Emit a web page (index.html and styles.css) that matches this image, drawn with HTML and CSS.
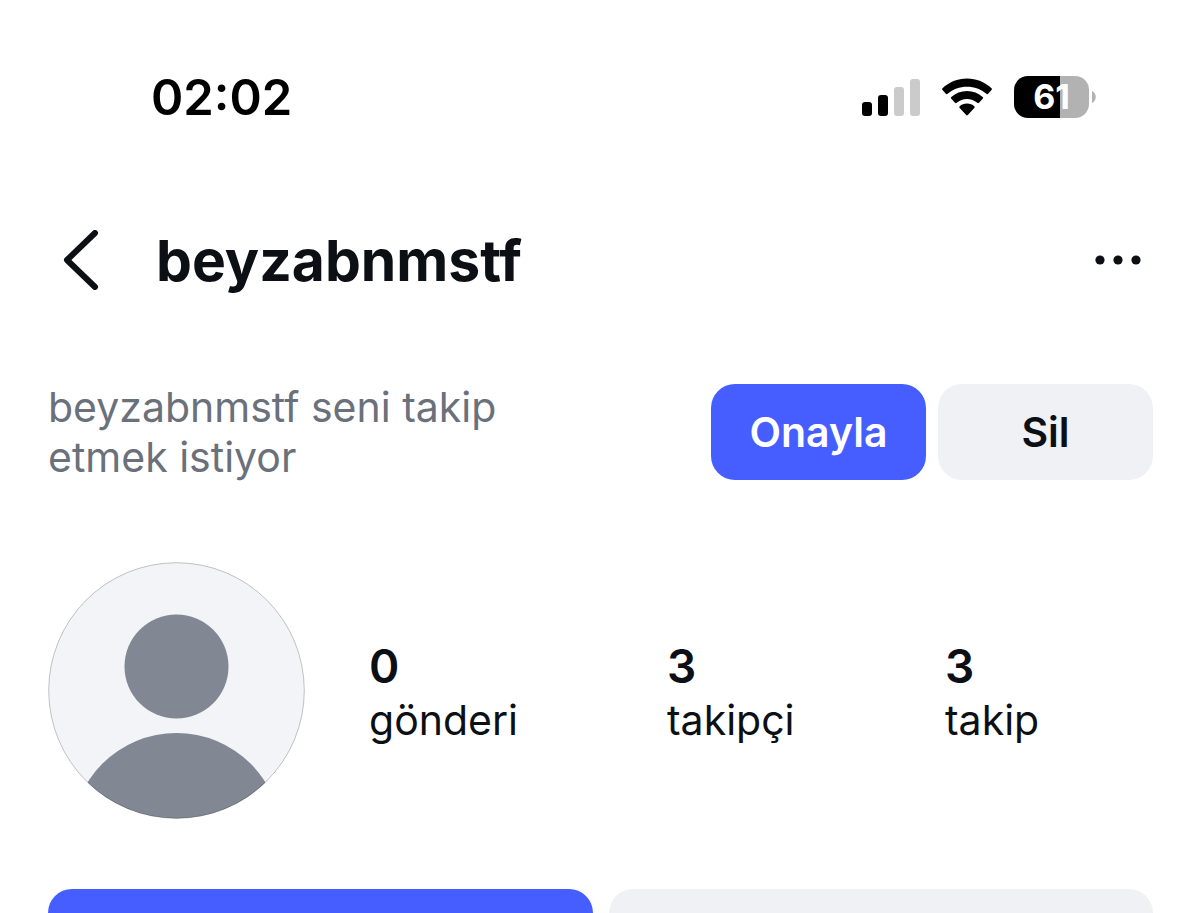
FILE: index.html
```html
<!DOCTYPE html>
<html lang="tr">
<head>
<meta charset="utf-8">
<meta name="viewport" content="width=device-width, initial-scale=1">
<title>beyzabnmstf</title>
<link rel="stylesheet" href="styles.css">
</head>
<body>
<div class="app">
  <div class="status-bar">
    <time class="clock">02:02</time>
    <div class="indicators">
      <svg class="signal" viewBox="0 0 58 38" aria-hidden="true">
        <rect x="0" y="24" width="10" height="14" rx="3"/>
        <rect x="16" y="17" width="10" height="21" rx="3"/>
        <rect class="off" x="32" y="9" width="10" height="29" rx="3"/>
        <rect class="off" x="48" y="1" width="10" height="37" rx="3"/>
      </svg>
      <svg class="wifi" viewBox="0 0 50 38" aria-hidden="true">
        <path d="M25 .5C34.500 .5 43 4.200 49.500 10.200Q50.400 11.100 49.500 12L46.200 15.800Q45.400 16.600 44.400 15.800C39 11.300 32.400 8.800 25 8.800S11 11.300 5.600 15.800Q4.600 16.600 3.800 15.800L.5 12Q-.4 11.100 .5 10.200C7 4.200 15.500 .5 25 .5Z"/>
        <path d="M25 13C31 13 36.400 15.300 40.700 19.100Q41.600 19.900 40.700 20.800L37 24.800Q36.200 25.600 35.300 24.800C32.300 22.500 28.900 21 25 21S17.700 22.500 14.700 24.800Q13.800 25.600 13 24.800L9.300 20.800Q8.400 19.900 9.300 19.100C13.600 15.300 19 13 25 13Z"/>
        <path d="M25 25.500C28 25.500 30.500 26.500 32.300 28.200Q33.200 29.100 32.300 30L25.800 37Q25 37.800 24.200 37L17.700 30Q16.800 29.100 17.700 28.200C19.500 26.500 22 25.500 25 25.500Z"/>
      </svg>
      <div class="battery">
        <span class="battery-level">61</span>
        <svg class="battery-tip" viewBox="0 0 4 12" aria-hidden="true"><path d="M0 0C5 2 5 10 0 12Z"/></svg>
      </div>
    </div>
  </div>

  <header class="header">
    <button class="icon-button" type="button" aria-label="Geri">
      <svg class="back-icon" viewBox="0 0 36 60" aria-hidden="true"><path d="M32 3L4 30L32 57"/></svg>
    </button>
    <h1 class="username">beyzabnmstf</h1>
    <button class="icon-button" type="button" aria-label="Diğer seçenekler">
      <svg class="more-icon" viewBox="0 0 46 10" aria-hidden="true"><circle cx="5" cy="5" r="4.600"/><circle cx="23" cy="5" r="4.600"/><circle cx="41" cy="5" r="4.600"/></svg>
    </button>
  </header>

  <main class="content">
    <section class="request">
      <p class="request-text">beyzabnmstf seni takip etmek istiyor</p>
      <div class="request-actions">
        <button class="button primary" type="button">Onayla</button>
        <button class="button secondary" type="button">Sil</button>
      </div>
    </section>

    <section class="profile">
      <svg class="avatar" viewBox="0 0 257 257" role="img" aria-label="Profil fotoğrafı">
        <defs><clipPath id="avatar-clip"><circle cx="128.500" cy="128.500" r="128"/></clipPath></defs>
        <g clip-path="url(#avatar-clip)">
          <rect class="avatar-background" width="257" height="257"/>
          <circle class="avatar-person" cx="128.500" cy="104.500" r="52"/>
          <circle class="avatar-person" cx="128.500" cy="276" r="105"/>
        </g>
        <circle class="avatar-ring" cx="128.500" cy="128.500" r="127.800"/>
      </svg>
      <ul class="stats">
        <li class="stat"><strong class="count">0</strong><span class="label">gönderi</span></li>
        <li class="stat"><strong class="count">3</strong><span class="label">takipçi</span></li>
        <li class="stat"><strong class="count">3</strong><span class="label">takip</span></li>
      </ul>
    </section>

    <div class="profile-actions">
      <button class="button primary" type="button" aria-label="Takip et"></button>
      <button class="button secondary" type="button" aria-label="Mesaj"></button>
    </div>
  </main>
</div>
</body>
</html>
```

FILE: styles.css
```css
* {
  box-sizing: border-box;
}

body {
  margin: 0;
  background: #fff;
  color: #0c1014;
  font-family: Inter, "Liberation Sans", sans-serif;
}

.app {
  height: 100vh;
  overflow: hidden;
}

.status-bar {
  display: flex;
  align-items: center;
  justify-content: space-between;
  height: 194px;
  padding: 0 104px 0 151px;
  color: #000;
}

.clock {
  font-size: 49px;
  font-weight: 600;
}

.indicators {
  display: flex;
  align-items: center;
  gap: 22px;
}

.signal {
  width: 58px;
  height: 38px;
}

.signal .off {
  fill: #cbcbcb;
}

.wifi {
  width: 50px;
  height: 38px;
}

.battery {
  display: flex;
  align-items: center;
  gap: 3px;
}

.battery-level {
  width: 75px;
  border-radius: 14px;
  background: linear-gradient(to right, #000 61%, #b2b2b2 61%);
  color: #fff;
  font-size: 34px;
  font-weight: 700;
  line-height: 42px;
  text-align: center;
}

.battery-tip {
  width: 4px;
  height: 12px;
  fill: #b2b2b2;
}

.header {
  display: flex;
  align-items: center;
  height: 132px;
  padding: 0 59px 0 63px;
}

.icon-button {
  display: flex;
  padding: 0;
  border: 0;
  background: none;
  color: inherit;
}

.back-icon {
  width: 36px;
  height: 60px;
  fill: none;
  stroke: currentColor;
  stroke-width: 6;
  stroke-linecap: round;
  stroke-linejoin: round;
}

.more-icon {
  width: 46px;
  height: 10px;
  fill: currentColor;
}

.username {
  flex: 1;
  margin: 0 0 0 57px;
  font-size: 57px;
  font-weight: 700;
}

.content {
  padding: 56px 47px 0 48px;
}

.request {
  display: flex;
  align-items: center;
  justify-content: space-between;
}

.request-text {
  max-width: 500px;
  margin: 0;
  color: #6a717b;
  font-size: 41px;
  line-height: 50px;
}

.request-actions {
  display: grid;
  grid-template-columns: 1fr 1fr;
  gap: 12px;
  width: 40%;
  max-width: 442px;
}

.button {
  height: 96px;
  padding: 0;
  border: 0;
  border-radius: 24px;
  font: inherit;
  font-size: 41px;
  font-weight: 600;
}

.primary {
  background: #465eff;
  color: #fff;
}

.secondary {
  background: #f0f1f5;
  color: #0c1014;
}

.profile {
  display: flex;
  align-items: center;
  gap: 64px;
  margin-top: 80px;
}

.avatar {
  flex: none;
  width: 257px;
  height: 257px;
}

.avatar-background {
  fill: #f3f4f7;
}

.avatar-person {
  fill: #818894;
}

.avatar-ring {
  fill: none;
  stroke: #000;
  stroke-opacity: 0.22;
}

.stats {
  display: grid;
  flex: 1;
  grid-template-columns: 298fr 278fr 208fr;
  margin: 0;
  padding: 0;
  list-style: none;
}

.stat {
  display: flex;
  flex-direction: column;
}

.count {
  font-size: 46px;
  font-weight: 600;
  line-height: 58px;
}

.label {
  font-size: 41px;
  line-height: 50px;
}

.profile-actions {
  display: grid;
  grid-template-columns: 1fr 1fr;
  gap: 16px;
  margin-top: 70px;
}
```
